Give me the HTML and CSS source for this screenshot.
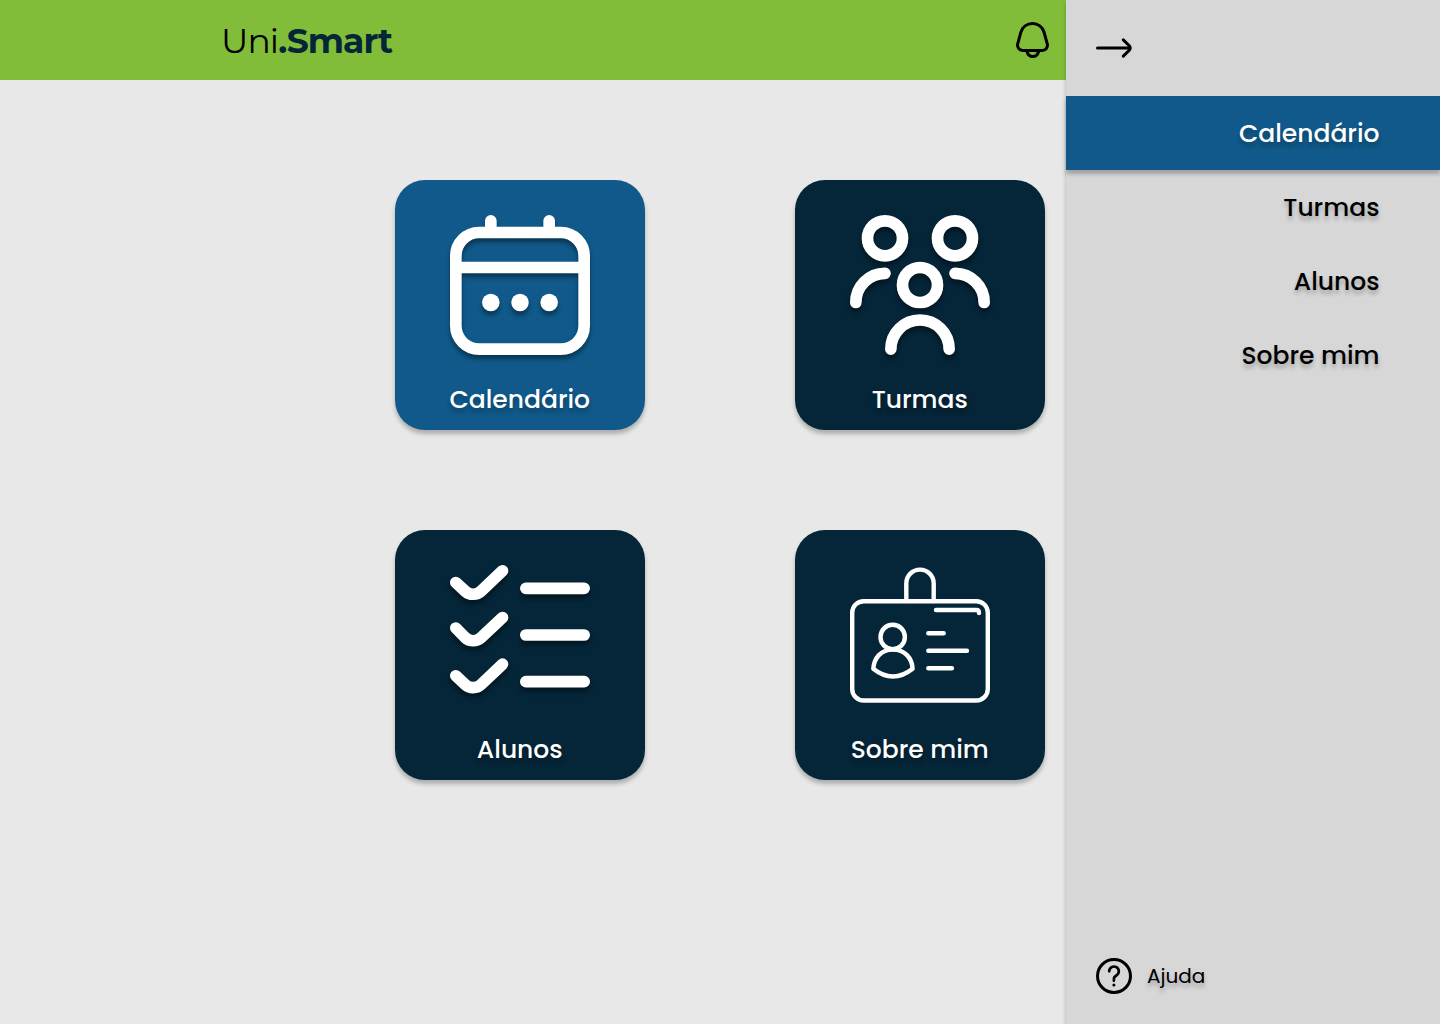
FILE: index.html
```html
<!DOCTYPE html>
<html lang="pt-BR">
<head>
<meta charset="utf-8">
<title>Uni.Smart</title>
<link rel="stylesheet" href="styles.css">
</head>
<body>
<header class="topbar">
  <div class="logo"><span class="logo-light">Uni</span><span class="logo-bold">.Smart</span></div>
  <svg class="bell" width="36" height="36" viewBox="0 0 36 36"><path d="M17.7 1.5C23 1.5 27.6 5 29 10l3.2 11.6c1 3.5-1.3 6.9-5 6.9H7.7c-3.5 0-5.8-3.2-5-6.6L5.8 10.4C7.2 5 12 1.5 17.7 1.5zM12 29.5c.8 3 3 5 5.8 5s5-2 5.8-5"/></svg>
</header>

<main class="grid">
  <a class="card card-active">
    <svg class="art" width="140" height="140" viewBox="0 0 140 140">
      <rect x="5.83" y="17.5" width="128.34" height="116.67" rx="23.3"/>
      <path d="M5.83 52.5h128.34M40.83 5.83V14M99.17 5.83V14"/>
      <g class="dots"><circle cx="40.83" cy="87.5" r="8.75"/><circle cx="70" cy="87.5" r="8.75"/><circle cx="99.17" cy="87.5" r="8.75"/></g>
    </svg>
    <span class="label">Calendário</span>
  </a>
  <a class="card">
    <svg class="art" width="140" height="140" viewBox="0 0 140 140">
      <circle cx="35" cy="23.33" r="17.5"/><circle cx="105" cy="23.33" r="17.5"/><circle cx="70" cy="70" r="17.5"/>
      <path d="M5.83 87.5A29.17 29.17 0 0 1 35 58.33M134.17 87.5A29.17 29.17 0 0 0 105 58.33M40.83 134.17a29.17 29.17 0 0 1 58.34 0"/>
    </svg>
    <span class="label">Turmas</span>
  </a>
  <a class="card">
    <svg class="art" width="140" height="140" viewBox="0 0 140 140">
      <path d="M75.83 23.33h58.34M75.83 70h58.34M75.83 116.67h58.34"/>
      <path d="M5.83 17.5l9.3 8.6a11.67 11.67 0 0 0 16.1-.1L52.5 5.83"/>
      <path d="M5.83 63l9.3 9.5a11.67 11.67 0 0 0 16.1.1L52.5 52.5"/>
      <path d="M5.83 110.83l9.3 8.6a11.67 11.67 0 0 0 16.1-.1L52.5 99.17"/>
    </svg>
    <span class="label">Alunos</span>
  </a>
  <a class="card">
    <svg class="art art-thin" width="140" height="140" viewBox="0 0 140 140">
      <rect x="2.2" y="36.2" width="135.6" height="99.3" rx="11.5"/>
      <path d="M56.3 36V18.3a13.7 13.7 0 0 1 27.4 0V36M86 45h40.3q2.7 0 2.7 3"/>
      <path d="M78.3 68.3h15.4M78.3 85.7H117M78.3 103.2h23.6"/>
      <circle cx="42.7" cy="72" r="12.2"/>
      <path d="M23.3 103.7C24 93 31 84.6 42.9 84.6S62 93 62.6 103.7q-19.7 15.6-39.3 0z"/>
    </svg>
    <span class="label">Sobre mim</span>
  </a>
</main>

<aside class="drawer">
  <svg class="icon close" width="38" height="36" viewBox="0 0 38 36"><path d="M1.5 18H34M27.3 9.9l6 5.9a3.1 3.1 0 0 1 0 4.4l-6 5.9"/></svg>
  <nav class="menu">
    <a class="item item-active">Calendário</a>
    <a class="item">Turmas</a>
    <a class="item">Alunos</a>
    <a class="item">Sobre mim</a>
  </nav>
  <div class="help">
    <svg class="icon" width="36" height="36" viewBox="0 0 36 36"><circle cx="18" cy="18" r="16.5"/><path class="mark" d="M13.2 13.3a4.8 4.8 0 1 1 7.2 4.2c-1.6.9-2.5 1.9-2.5 3.6v1.6"/><circle class="point" cx="17.9" cy="27" r="1.5"/></svg>
    <span class="help-text">Ajuda</span>
  </div>
</aside>
</body>
</html>
```
FILE: styles.css
```css
* { box-sizing: border-box; }

body {
  margin: 0;
  height: 1024px;
  overflow: hidden;
  background: #e8e8e8;
  font-family: Poppins, Inter, "Open Sans", sans-serif;
  font-weight: 500;
}

svg { display: block; fill: none; stroke-linecap: round; stroke-linejoin: round; }

.topbar {
  height: 80px;
  padding: 0 389px 0 221px;
  display: flex;
  align-items: center;
  justify-content: space-between;
  background: #81bd39;
}

.logo { font-family: Montserrat, Inter, sans-serif; font-size: 34.5px; line-height: 40px; color: #052538; white-space: nowrap; padding-top: 1px; }
.logo-light { font-weight: 400; color: #000; letter-spacing: -.9px; }
.logo-bold { font-weight: 700; letter-spacing: -.9px; }
.bell { stroke: #000; stroke-width: 3; }

.grid {
  width: 650px;
  margin: 100px auto 0;
  display: grid;
  grid-template-columns: 250px 250px;
  gap: 100px 150px;
}

.card {
  height: 250px;
  padding-top: 35px;
  display: flex;
  flex-direction: column;
  align-items: center;
  gap: 26px;
  border-radius: 30px;
  background: #052538;
  color: #fff;
  box-shadow: 0 4px 4px rgba(0, 0, 0, .25);
}
.card-active { background: #10598a; }

.art { stroke: #fff; stroke-width: 11.67; overflow: visible; filter: drop-shadow(0 4px 2px rgba(0, 0, 0, .4)); }
.art-thin { stroke-width: 4.4; filter: none; }
.dots { fill: #fff; stroke: none; }

.label, .item { font-size: 25px; line-height: 38px; white-space: nowrap; text-shadow: 0 4px 4px rgba(0, 0, 0, .25); }
.label { padding-right: .5px; }

.drawer {
  position: absolute;
  top: 0;
  right: 0;
  width: 374px;
  height: 1024px;
  padding: 30px 0;
  display: flex;
  flex-direction: column;
  background: #d7d7d7;
  box-shadow: 0 4px 4px rgba(0, 0, 0, .25);
}
.icon { stroke: #000; stroke-width: 3; }
.mark { stroke-width: 2.7; }
.point { fill: #000; stroke: none; }
.close { margin-left: 30px; }

.menu { margin-top: 30px; flex: 1; }
.item {
  height: 74px;
  padding: 2px 60.5px 0 0;
  display: flex;
  align-items: center;
  justify-content: flex-end;
  color: #000;
}
.item-active { background: #10598a; color: #fff; box-shadow: 0 4px 4px rgba(0, 0, 0, .25); }

.help { margin-left: 30px; display: flex; align-items: center; gap: 15px; }
.help-text { font-size: 20px; font-weight: 400; line-height: 30px; text-shadow: 0 4px 4px rgba(0, 0, 0, .25); }
```
